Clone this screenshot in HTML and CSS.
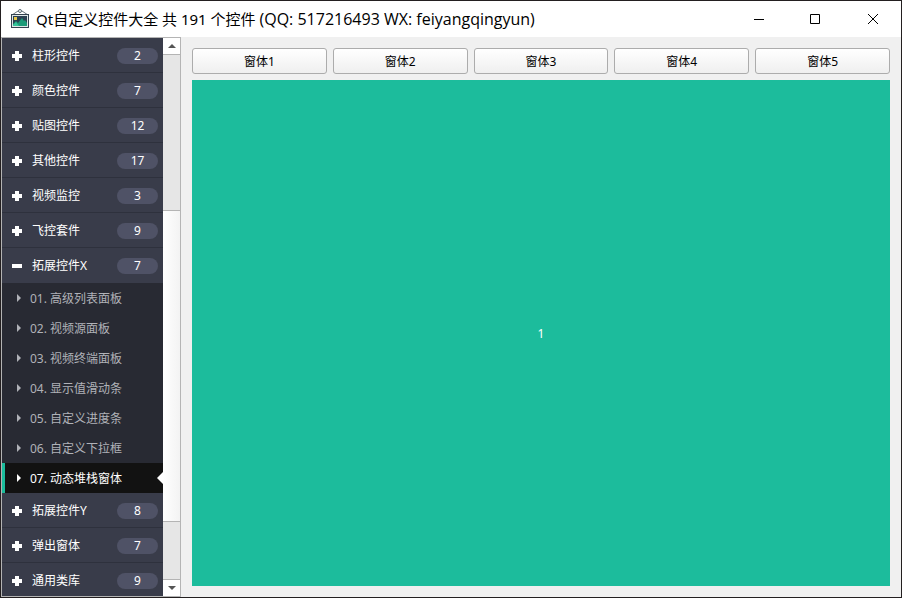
FILE: index.html
```html
<!DOCTYPE html>
<html lang="zh-CN">
<head>
<meta charset="utf-8">
<title>Qt自定义控件大全</title>
<link rel="stylesheet" href="styles.css">
</head>
<body>
<div class="window">
  <header class="titlebar">
    <svg class="app-icon" viewBox="0 0 20 20" aria-hidden="true">
      <path d="M2 6 L8 2 M12 2 L18 6" fill="none" stroke="#66737c" stroke-width="1"/>
      <circle cx="10" cy="2" r="1.5" fill="#fff" stroke="#53636d"/>
      <rect x="1.5" y="5.5" width="17" height="13" fill="#2c4152" stroke="#34424f"/>
      <rect x="2.5" y="6.5" width="15" height="11" fill="none" stroke="#dfe6e6"/>
      <rect x="4" y="8" width="3" height="3" fill="#e8c84a"/>
      <path d="M3 17 V15 L6 12 L8 14 L12 9 L14 12 L15 11 L17 14 V17 Z" fill="#1c9b78"/>
      <path d="M3 17 V16 L6 13 L9 17 Z" fill="#36c49a"/>
    </svg>
    <h1 class="title">Qt自定义控件大全 共 191 个控件 <span class="contact">(QQ: 517216493 WX: feiyangqingyun)</span></h1>
    <button class="win-btn" type="button" aria-label="最小化"><svg viewBox="0 0 12 12"><path d="M1 6.5H11"/></svg></button>
    <button class="win-btn" type="button" aria-label="最大化"><svg viewBox="0 0 12 12"><path d="M0.5 1.5H9.5V10.5H0.5Z"/></svg></button>
    <button class="win-btn" type="button" aria-label="关闭"><svg viewBox="0 0 12 12"><path d="M1 1L11 11M11 1L1 11"/></svg></button>
  </header>
  <div class="body">
    <aside class="sidebar">
      <nav class="nav">
        <button class="group" type="button"><span class="sign"></span><span class="name">柱形控件</span><span class="count">2</span></button>
        <button class="group" type="button"><span class="sign"></span><span class="name">颜色控件</span><span class="count">7</span></button>
        <button class="group" type="button"><span class="sign"></span><span class="name">贴图控件</span><span class="count">12</span></button>
        <button class="group" type="button"><span class="sign"></span><span class="name">其他控件</span><span class="count">17</span></button>
        <button class="group" type="button"><span class="sign"></span><span class="name">视频监控</span><span class="count">3</span></button>
        <button class="group" type="button"><span class="sign"></span><span class="name">飞控套件</span><span class="count">9</span></button>
        <button class="group open" type="button" aria-expanded="true"><span class="sign"></span><span class="name">拓展控件X</span><span class="count">7</span></button>
        <ul class="items">
          <li><a class="item" href="#">01. 高级列表面板</a></li>
          <li><a class="item" href="#">02. 视频源面板</a></li>
          <li><a class="item" href="#">03. 视频终端面板</a></li>
          <li><a class="item" href="#">04. 显示值滑动条</a></li>
          <li><a class="item" href="#">05. 自定义进度条</a></li>
          <li><a class="item" href="#">06. 自定义下拉框</a></li>
          <li><a class="item active" href="#" aria-current="page">07. 动态堆栈窗体</a></li>
        </ul>
        <button class="group" type="button"><span class="sign"></span><span class="name">拓展控件Y</span><span class="count">8</span></button>
        <button class="group" type="button"><span class="sign"></span><span class="name">弹出窗体</span><span class="count">7</span></button>
        <button class="group" type="button"><span class="sign"></span><span class="name">通用类库</span><span class="count">9</span></button>
      </nav>
      <div class="scrollbar">
        <button class="step" type="button" aria-label="向上滚动"><svg viewBox="0 0 8 4"><path d="M0 4L4 0L8 4Z"/></svg></button>
        <div class="track"><div class="thumb"></div></div>
        <button class="step down" type="button" aria-label="向下滚动"><svg viewBox="0 0 8 4"><path d="M0 0L4 4L8 0Z"/></svg></button>
      </div>
    </aside>
    <main class="content">
      <div class="tabs">
        <button class="tab" type="button">窗体1</button>
        <button class="tab" type="button">窗体2</button>
        <button class="tab" type="button">窗体3</button>
        <button class="tab" type="button">窗体4</button>
        <button class="tab" type="button">窗体5</button>
      </div>
      <section class="page">1</section>
    </main>
  </div>
</div>
</body>
</html>
```
FILE: styles.css
```css
* { box-sizing: border-box; }

body {
  margin: 0;
  font: 12px/16px "Noto Sans", "Noto Sans CJK SC", sans-serif;
  color: #000;
}

button {
  margin: 0;
  padding: 0;
  border: 0;
  background: none;
  font: inherit;
  color: inherit;
}

.window {
  display: flex;
  flex-direction: column;
  height: 100vh;
  border: 1px solid #231f20;
  background: #f0f0f0;
}

.titlebar {
  display: flex;
  flex: none;
  align-items: center;
  height: 36px;
  padding-left: 9px;
  background: #fff;
}

.app-icon {
  flex: none;
  width: 20px;
  height: 20px;
}

.title {
  flex: 1;
  margin: 0 0 0 6px;
  font-size: 15px;
  line-height: 20px;
  font-weight: 400;
  white-space: nowrap;
}

.contact {
  font-family: "Open Sans", sans-serif;
  font-size: 16px;
}

.win-btn {
  display: flex;
  align-items: center;
  justify-content: center;
  width: 57px;
  height: 36px;
}

.win-btn svg {
  width: 12px;
  height: 12px;
  fill: none;
  stroke: #000;
}

.body {
  display: flex;
  flex: 1;
  min-height: 0;
}

.sidebar {
  display: flex;
  flex: none;
  width: 180px;
  border: 1px solid #b4b4b4;
}

.nav {
  flex: 1;
  overflow: hidden;
  background: #393c4a;
  color: #fff;
}

.group {
  display: flex;
  align-items: center;
  width: 100%;
  height: 35px;
  padding: 2px 5px 0 10px;
  border-bottom: 1px solid #2e313d;
  text-align: left;
}

.open { border-bottom-color: #393c4a; }

.sign {
  width: 10px;
  height: 10px;
  background:
    linear-gradient(#fff, #fff) center / 10px 4px no-repeat,
    linear-gradient(#fff, #fff) center / 4px 10px no-repeat;
}

.open .sign {
  background: linear-gradient(#fff, #fff) center / 10px 4px no-repeat;
}

.name {
  flex: 1;
  margin-left: 10px;
}

.count {
  width: 41px;
  border-radius: 8px;
  background: #4f5266;
  text-align: center;
}

.items {
  margin: 0;
  padding: 0;
  list-style: none;
  background: #282a33;
}

.item {
  position: relative;
  display: flex;
  align-items: center;
  height: 30px;
  padding: 2px 0 0 15px;
  color: #b0b2b8;
  text-decoration: none;
}

.item::before {
  content: "";
  margin: 0 9px 2px 0;
  border: 4px solid transparent;
  border-right: 0;
  border-left-color: currentColor;
}

.active {
  background: #121212;
  box-shadow: inset 3px 0 #1abc9c;
  color: #fff;
}

.active::after {
  content: "";
  position: absolute;
  top: 9px;
  right: 0;
  border: 6px solid transparent;
  border-left: 0;
  border-right-color: #fff;
}

.scrollbar {
  display: flex;
  flex-direction: column;
  width: 17px;
  background: #e6e6e6;
}

.step {
  display: flex;
  flex: none;
  align-items: center;
  justify-content: center;
  height: 17px;
  border-bottom: 1px solid #b4b4b4;
  background: #fff;
}

.down {
  border-top: 1px solid #b4b4b4;
  border-bottom: 0;
}

.step svg {
  width: 8px;
  height: 4px;
  fill: #555;
}

.track {
  display: grid;
  flex: 1;
  grid-template-rows: 155fr 312fr 57fr;
}

.thumb {
  grid-row: 2;
  border: solid #b4b4b4;
  border-width: 1px 0;
  background: linear-gradient(90deg, #fff, #f3f3f3);
}

.content {
  display: flex;
  flex: 1;
  flex-direction: column;
  gap: 6px;
  padding: 11px;
}

.tabs {
  display: flex;
  gap: 6px;
}

.tab {
  flex: 1;
  height: 26px;
  padding-top: 2px;
  border: 1px solid #acacac;
  border-radius: 3px;
  background: linear-gradient(#fff, #efefef);
}

.page {
  display: flex;
  flex: 1;
  align-items: center;
  justify-content: center;
  padding-top: 2px;
  background: #1cbc9c;
  color: #fff;
}
```
